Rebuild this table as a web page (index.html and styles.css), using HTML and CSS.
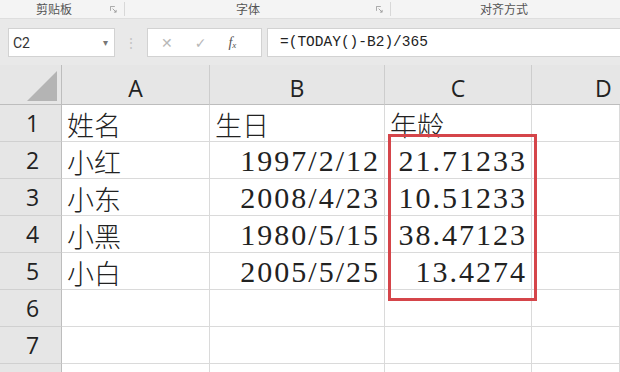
FILE: index.html
```html
<!DOCTYPE html>
<html lang="zh-CN">
<head>
  <meta charset="UTF-8" />
  <title>年龄计算</title>
  <link rel="stylesheet" href="styles.css">
</head>
<body>
  <div class="ribbon">
    <div class="group group-clip">
      <span class="group-name">剪贴板</span>
      <svg class="launcher" viewBox="0 0 8 8"><path d="M0.5 0.5h5M0.5 0.5v5" stroke="#9a9a9a" fill="none"/><path d="M3 3l4 4M4.5 7H7V4.5" stroke="#9a9a9a" fill="none"/></svg>
    </div>
    <div class="group group-font">
      <span class="group-name">字体</span>
      <svg class="launcher" viewBox="0 0 8 8"><path d="M0.5 0.5h5M0.5 0.5v5" stroke="#9a9a9a" fill="none"/><path d="M3 3l4 4M4.5 7H7V4.5" stroke="#9a9a9a" fill="none"/></svg>
    </div>
    <div class="group group-align">
      <span class="group-name">对齐方式</span>
    </div>
  </div>

  <div class="formula-bar">
    <div class="name-box">
      <span>C2</span>
      <span class="caret">&#9662;</span>
    </div>
    <span class="grip">&#8942;</span>
    <div class="fx-buttons">
      <span class="btn-x">&#10005;</span>
      <span class="btn-ok">&#10003;</span>
      <span class="btn-fx">f<sub>x</sub></span>
    </div>
    <div class="formula">=(TODAY()-B2)/365</div>
  </div>

  <div class="sheet">
    <div class="grid">
      <div class="corner"><span class="tri"></span></div>
      <div class="col-head">A</div>
      <div class="col-head">B</div>
      <div class="col-head">C</div>
      <div class="col-head last">D</div>

      <div class="row-head">1</div>
      <div class="cell txt">姓名</div>
      <div class="cell txt">生日</div>
      <div class="cell txt">年龄</div>
      <div class="cell"></div>

      <div class="row-head">2</div>
      <div class="cell txt">小红</div>
      <div class="cell num">1997/2/12</div>
      <div class="cell num">21.71233</div>
      <div class="cell"></div>

      <div class="row-head">3</div>
      <div class="cell txt">小东</div>
      <div class="cell num">2008/4/23</div>
      <div class="cell num">10.51233</div>
      <div class="cell"></div>

      <div class="row-head">4</div>
      <div class="cell txt">小黑</div>
      <div class="cell num">1980/5/15</div>
      <div class="cell num">38.47123</div>
      <div class="cell"></div>

      <div class="row-head">5</div>
      <div class="cell txt">小白</div>
      <div class="cell num">2005/5/25</div>
      <div class="cell num">13.4274</div>
      <div class="cell"></div>

      <div class="row-head">6</div>
      <div class="cell"></div>
      <div class="cell"></div>
      <div class="cell"></div>
      <div class="cell"></div>

      <div class="row-head">7</div>
      <div class="cell"></div>
      <div class="cell"></div>
      <div class="cell"></div>
      <div class="cell"></div>

      <!-- next row only peeks in at the bottom -->
      <div class="row-head"></div>
      <div class="cell"></div>
      <div class="cell"></div>
      <div class="cell"></div>
      <div class="cell"></div>
    </div>
    <!-- highlight around the age results -->
    <div class="mark"></div>
  </div>
</body>
</html>
```

FILE: styles.css
```css
* {
  box-sizing: border-box;
  margin: 0;
  padding: 0;
}

body {
  width: 620px;
  height: 372px;
  overflow: hidden;
  background: #fff;
  font-family: "Noto Sans CJK SC", sans-serif;
}

/* ribbon group captions */
.ribbon {
  height: 19px;
  display: flex;
  background: #f4f4f4;
  border-bottom: 1px solid #dedede;
}

.group {
  position: relative;
  display: flex;
  align-items: center;
  border-right: 1px solid #d8d8d8;
  height: 14px;
  margin-top: 2px;
}

.group-clip { width: 125px; padding-left: 36px; }
.group-font { width: 266px; padding-left: 111px; }
.group-align { flex: 1; padding-left: 89px; border-right: none; }

.group-name {
  font-size: 12px;
  line-height: 1;
  color: #555;
}

.launcher {
  position: absolute;
  right: 7px;
  top: 4px;
  width: 7px;
  height: 7px;
}

/* name box + formula input */
.formula-bar {
  height: 46px;
  background: #e9e9e9;
  display: flex;
  align-items: flex-start;
  padding: 9px 0 0 8px;
}

.name-box {
  width: 107px;
  height: 29px;
  background: #fff;
  border: 1px solid #d2d2d2;
  display: flex;
  align-items: center;
  justify-content: space-between;
  padding: 0 6px 0 4px;
  font-family: Roboto, "Liberation Sans", sans-serif;
  font-size: 14px;
  color: #333;
}

.caret {
  font-size: 10px;
  color: #777;
}

.grip {
  width: 32px;
  text-align: center;
  color: #c4c4c4;
  font-size: 14px;
  line-height: 29px;
}

.fx-buttons {
  width: 115px;
  height: 29px;
  background: #fff;
  border: 1px solid #d2d2d2;
  display: flex;
  align-items: center;
  padding-left: 13px;
  gap: 22px;
}

.btn-x,
.btn-ok {
  color: #b8b8b8;
  font-size: 14px;
  font-family: "DejaVu Sans", sans-serif;
}

.btn-fx {
  font-family: "Liberation Serif", serif;
  font-style: italic;
  font-size: 14px;
  color: #555;
}

.btn-fx sub {
  font-size: 9px;
  vertical-align: -1px;
}

.formula {
  flex: 1;
  height: 29px;
  margin-left: 5px;
  background: #fff;
  border: 1px solid #d2d2d2;
  border-right: none;
  padding-left: 12px;
  font-family: "Liberation Mono", monospace;
  font-size: 14.5px;
  line-height: 27px;
  color: #222;
}

/* worksheet */
.sheet {
  position: relative;
}

.grid {
  display: grid;
  grid-template-columns: 62px 148px 175px 147px 88px;
  grid-template-rows: 40px repeat(8, 37px);
}

.corner {
  position: relative;
  background: #e6e6e6;
  border-right: 1px solid #bdbdbd;
  border-bottom: 1px solid #bdbdbd;
}

.tri {
  position: absolute;
  right: 4px;
  bottom: 3px;
  width: 0;
  height: 0;
  border-left: 30px solid transparent;
  border-bottom: 30px solid #b4b4b4;
}

.col-head {
  background: #e6e6e6;
  border-right: 1px solid #cdcdcd;
  border-bottom: 1px solid #bdbdbd;
  display: flex;
  align-items: flex-end;
  justify-content: center;
  padding-bottom: 4px;
  font-family: "Open Sans", "Liberation Sans", sans-serif;
  font-size: 23px;
  line-height: 1;
  color: #222;
}

.col-head.last {
  border-right: none;
  justify-content: flex-start;
  padding-left: 63px;
}

.row-head {
  background: #e6e6e6;
  border-right: 1px solid #bdbdbd;
  border-bottom: 1px solid #d0d0d0;
  display: flex;
  align-items: center;
  justify-content: center;
  font-family: "Open Sans", "Liberation Sans", sans-serif;
  font-size: 23px;
  line-height: 1;
  color: #222;
  padding-left: 4px;
}

.cell {
  border-right: 1px solid #dadada;
  border-bottom: 1px solid #dadada;
  display: flex;
  align-items: center;
  white-space: nowrap;
  overflow: visible;
  color: #222;
}

.txt {
  font-size: 27px;
  font-weight: 300;
  padding: 3px 0 0 5px;
}

.num {
  justify-content: flex-end;
  padding: 1px 4px 0 0;
  font-family: "Liberation Serif", serif;
  font-size: 30px;
  letter-spacing: 2px;
}

.mark {
  position: absolute;
  left: 388px;
  top: 69px;
  width: 149px;
  height: 167px;
  border: 3px solid #d5454a;
}
```
